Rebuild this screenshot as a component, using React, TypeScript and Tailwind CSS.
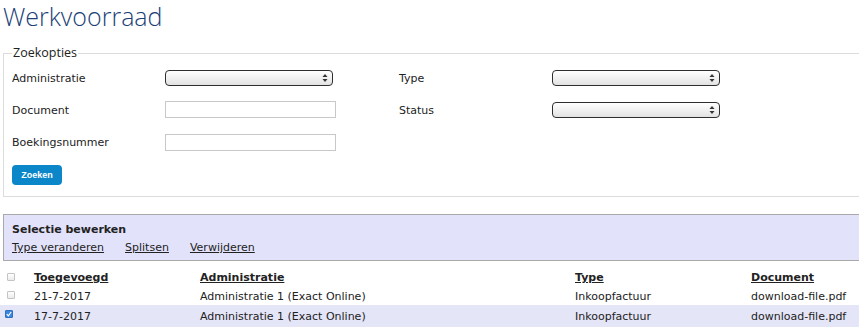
import React from "react";

function FakeSelect() {
  return (
    <div className="w-[168px] h-[16px] rounded-[4px] border border-[#2e2e2e] bg-linear-to-b from-white via-[#f1f1f1] to-[#e2e2e2] flex items-center justify-end pr-[4px]">
      <svg width="6" height="10" viewBox="0 0 6 10">
        <path d="M3 1 L5.5 4 L0.5 4 Z" fill="#333" />
        <path d="M3 9 L5.5 6 L0.5 6 Z" fill="#333" />
      </svg>
    </div>
  );
}

function TextInput() {
  return <div className="w-[171px] h-[17px] border border-[#c8c8c8] bg-white" />;
}

function Check({ checked = false }: { checked?: boolean }) {
  if (checked) {
    return (
      <div className="w-[8px] h-[8px] rounded-[1px] bg-[#3b86e0] border border-[#2f6fc0] flex items-center justify-center">
        <svg width="6" height="6" viewBox="0 0 6 6">
          <path d="M0.8 3.2 L2.4 4.8 L5.2 1" stroke="white" strokeWidth="1.2" fill="none" />
        </svg>
      </div>
    );
  }
  return <div className="w-[8px] h-[8px] rounded-[1px] border border-[#c4c4c4] bg-linear-to-b from-white to-[#ececec]" />;
}

export default function App() {
  return (
    <div className="w-[859px] h-[334px] overflow-hidden bg-white font-['DejaVu_Sans',sans-serif] text-[11px] text-[#222]">
      <h1 className="h-[45px] pl-[3px] pt-[1px] font-['Open_Sans',sans-serif] font-light text-[25px] leading-[30px] text-[#1c3f77]">
        Werkvoorraad
      </h1>
      <fieldset className="ml-[3px] w-[880px] border border-[#dcdcdc] pl-[8px] pb-[11px]">
        <legend className="font-['Open_Sans',sans-serif] text-[12.5px] leading-[16px] px-[1px] text-[#222]">Zoekopties</legend>
        <div className="flex items-center h-[32px] pt-[2px]">
          <div className="w-[153px] pt-[3px]">Administratie</div>
          <div className="w-[234px]"><FakeSelect /></div>
          <div className="w-[153px] pt-[3px]">Type</div>
          <FakeSelect />
        </div>
        <div className="flex items-center h-[33px]">
          <div className="w-[153px] pt-[4px]">Document</div>
          <div className="w-[234px]"><TextInput /></div>
          <div className="w-[153px] pt-[4px]">Status</div>
          <FakeSelect />
        </div>
        <div className="flex items-center h-[32px]">
          <div className="w-[153px] pt-[3px]">Boekingsnummer</div>
          <TextInput />
        </div>
        <button className="mt-[7px] w-[50px] h-[20px] rounded-[4px] bg-[#0b86c8] text-white font-bold font-['Liberation_Sans',sans-serif] text-[9px] leading-[20px] text-center">
          Zoeken
        </button>
      </fieldset>
      <div className="mt-[17px] ml-[3px] w-[880px] border border-[#a9a9a9] bg-[#e2e2fb] pl-[8px] pt-[7px] pb-[4px]">
        <div className="font-bold leading-[16px]">Selectie bewerken</div>
        <div className="mt-[2px] flex gap-[21px] leading-[16px]">
          <span className="underline">Type veranderen</span>
          <span className="underline">Splitsen</span>
          <span className="underline">Verwijderen</span>
        </div>
      </div>
      <div className="mt-[6px]">
        <div className="flex items-center h-[19px] pt-[3px]">
          <div className="w-[34px] pl-[7px] -mt-[2px]"><Check /></div>
          <div className="w-[166px] font-bold underline">Toegevoegd</div>
          <div className="w-[375px] font-bold underline">Administratie</div>
          <div className="w-[176px] font-bold underline">Type</div>
          <div className="font-bold underline">Document</div>
        </div>
        <div className="flex items-center h-[19px] pt-[3px]">
          <div className="w-[34px] pl-[7px] -mt-[4px]"><Check /></div>
          <div className="w-[166px]">21-7-2017</div>
          <div className="w-[375px]">Administratie 1 (Exact Online)</div>
          <div className="w-[176px]">Inkoopfactuur</div>
          <div>download-file.pdf</div>
        </div>
        <div className="flex items-center h-[22px] pt-[2px] bg-[#e5e5f8]">
          <div className="w-[34px] pl-[5px] -mt-[7px]"><Check checked /></div>
          <div className="w-[166px]">17-7-2017</div>
          <div className="w-[375px]">Administratie 1 (Exact Online)</div>
          <div className="w-[176px]">Inkoopfactuur</div>
          <div>download-file.pdf</div>
        </div>
      </div>
    </div>
  );
}
